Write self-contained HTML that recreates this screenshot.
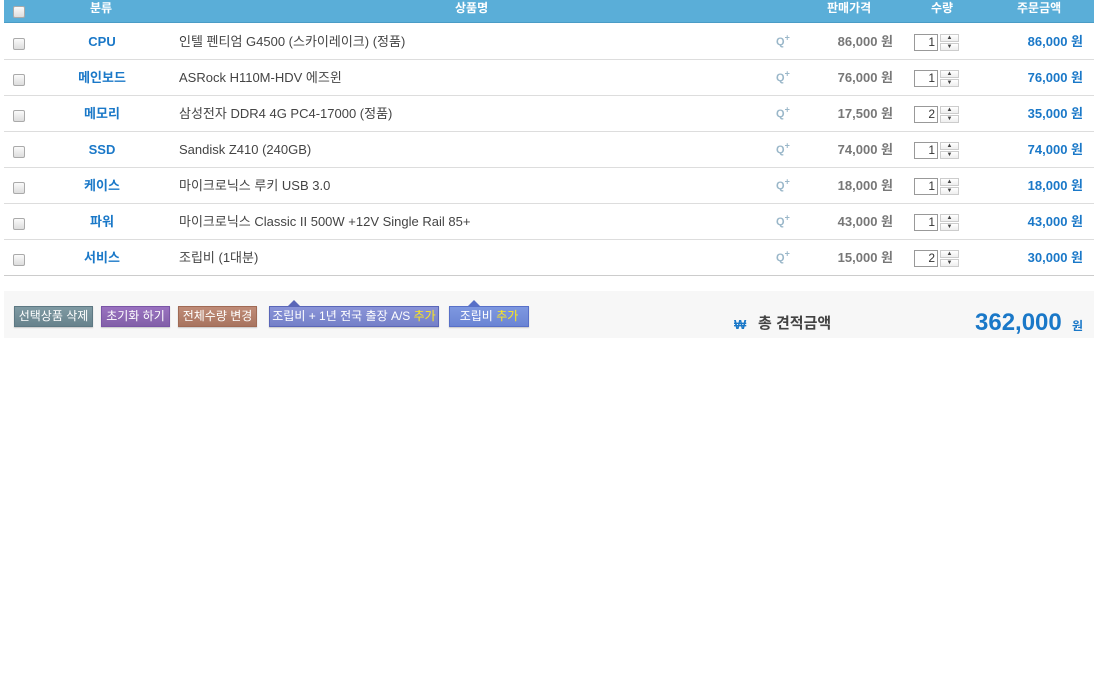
<!DOCTYPE html>
<html><head><meta charset="utf-8"><style>
*{margin:0;padding:0;box-sizing:border-box}
body{width:1098px;height:698px;background:#fff;font-family:"Liberation Sans","Noto Sans CJK KR",sans-serif;position:relative;overflow:hidden}
.a{position:absolute;line-height:16px;white-space:nowrap}
.hdr{left:4px;top:0;width:1090px;height:23px;background:#5aaed8;border-bottom:1px solid #4a9cc6}
.ht{color:#fff;font-size:12px;font-weight:bold;top:0px}
.cb{width:12px;height:12px;border:1px solid #aaa;border-radius:2px;background:linear-gradient(#fafafa,#ddd)}
.line{left:4px;width:1090px;height:1px;background:#ddd}
.cat{color:#1a78c8;font-weight:bold;font-size:13px;width:80px;text-align:center;left:62px}
.nm{left:179px;font-size:13px;color:#444}
.q{left:776px;font-size:11px;font-weight:bold;color:#9ab7c9}
.q sup{font-size:9px;line-height:0}
.pr{right:205px;font-size:13px;font-weight:bold;color:#777}
.tot{right:15px;font-size:13px;font-weight:bold;color:#1a78c8}
.inp{left:914px;width:24px;height:17px;border:1px solid #999;font-size:12px;text-align:right;padding-right:2px;line-height:15px;color:#333;background:#fff}
.sp{left:940px;width:19px;height:8px;border:1px solid #ccc;background:linear-gradient(#fff,#eee);font-size:6px;line-height:6px;text-align:center;color:#444}
.btn{top:306px;height:21px;color:#fff;font-size:12px;line-height:19px;text-align:center;border:1px solid;box-shadow:0 1px 1px rgba(0,0,0,.2)}
.y{color:#ffe81a}
.tri{width:0;height:0;border-left:6px solid transparent;border-right:6px solid transparent}
</style></head><body>
<div class="a hdr"></div>
<div class="a cb" style="left:13px;top:6px"></div>
<div class="a ht" style="left:90px">분류</div>
<div class="a ht" style="left:455px">상품명</div>
<div class="a ht" style="left:827px">판매가격</div>
<div class="a ht" style="left:931px">수량</div>
<div class="a ht" style="left:1017px">주문금액</div>

<div class="a cb" style="left:13px;top:38px"></div><div class="a cat" style="top:34px">CPU</div><div class="a nm" style="top:34px">인텔 펜티엄 G4500 (스카이레이크) (정품)</div><div class="a q" style="top:34px">Q<sup>+</sup></div><div class="a pr" style="top:34px">86,000 원</div><div class="a inp" style="top:34px">1</div><div class="a sp" style="top:34px">▲</div><div class="a sp" style="top:43px">▼</div><div class="a tot" style="top:34px">86,000 원</div><div class="a line" style="top:59px"></div>

<div class="a cb" style="left:13px;top:74px"></div><div class="a cat" style="top:70px">메인보드</div><div class="a nm" style="top:70px">ASRock H110M-HDV 에즈윈</div><div class="a q" style="top:70px">Q<sup>+</sup></div><div class="a pr" style="top:70px">76,000 원</div><div class="a inp" style="top:70px">1</div><div class="a sp" style="top:70px">▲</div><div class="a sp" style="top:79px">▼</div><div class="a tot" style="top:70px">76,000 원</div><div class="a line" style="top:95px"></div>

<div class="a cb" style="left:13px;top:110px"></div><div class="a cat" style="top:106px">메모리</div><div class="a nm" style="top:106px">삼성전자 DDR4 4G PC4-17000 (정품)</div><div class="a q" style="top:106px">Q<sup>+</sup></div><div class="a pr" style="top:106px">17,500 원</div><div class="a inp" style="top:106px">2</div><div class="a sp" style="top:106px">▲</div><div class="a sp" style="top:115px">▼</div><div class="a tot" style="top:106px">35,000 원</div><div class="a line" style="top:131px"></div>

<div class="a cb" style="left:13px;top:146px"></div><div class="a cat" style="top:142px">SSD</div><div class="a nm" style="top:142px">Sandisk Z410 (240GB)</div><div class="a q" style="top:142px">Q<sup>+</sup></div><div class="a pr" style="top:142px">74,000 원</div><div class="a inp" style="top:142px">1</div><div class="a sp" style="top:142px">▲</div><div class="a sp" style="top:151px">▼</div><div class="a tot" style="top:142px">74,000 원</div><div class="a line" style="top:167px"></div>

<div class="a cb" style="left:13px;top:182px"></div><div class="a cat" style="top:178px">케이스</div><div class="a nm" style="top:178px">마이크로닉스 루키 USB 3.0</div><div class="a q" style="top:178px">Q<sup>+</sup></div><div class="a pr" style="top:178px">18,000 원</div><div class="a inp" style="top:178px">1</div><div class="a sp" style="top:178px">▲</div><div class="a sp" style="top:187px">▼</div><div class="a tot" style="top:178px">18,000 원</div><div class="a line" style="top:203px"></div>

<div class="a cb" style="left:13px;top:218px"></div><div class="a cat" style="top:214px">파워</div><div class="a nm" style="top:214px">마이크로닉스 Classic II 500W +12V Single Rail 85+</div><div class="a q" style="top:214px">Q<sup>+</sup></div><div class="a pr" style="top:214px">43,000 원</div><div class="a inp" style="top:214px">1</div><div class="a sp" style="top:214px">▲</div><div class="a sp" style="top:223px">▼</div><div class="a tot" style="top:214px">43,000 원</div><div class="a line" style="top:239px"></div>

<div class="a cb" style="left:13px;top:254px"></div><div class="a cat" style="top:250px">서비스</div><div class="a nm" style="top:250px">조립비 (1대분)</div><div class="a q" style="top:250px">Q<sup>+</sup></div><div class="a pr" style="top:250px">15,000 원</div><div class="a inp" style="top:250px">2</div><div class="a sp" style="top:250px">▲</div><div class="a sp" style="top:259px">▼</div><div class="a tot" style="top:250px">30,000 원</div><div class="a line" style="top:275px;background:#ccc"></div>

<div class="a" style="left:4px;top:291px;width:1090px;height:47px;background:#f7f7f7"></div>
<div class="a btn" style="left:14px;width:79px;background:linear-gradient(#7f9aa3,#67828c);border-color:#5d7883;line-height:19px">선택상품 삭제</div>
<div class="a btn" style="left:101px;width:69px;background:linear-gradient(#9a72c0,#8260a8);border-color:#7a55a6;line-height:19px">초기화 하기</div>
<div class="a btn" style="left:178px;width:79px;background:linear-gradient(#c08c78,#a8745f);border-color:#a06a55;line-height:19px">전체수량 변경</div>
<div class="a tri" style="left:288px;top:300px;border-bottom:6px solid #5a66b8"></div>
<div class="a btn" style="left:269px;width:170px;background:linear-gradient(#8a94d8,#7480c8);border-color:#5a66b8;line-height:19px">조립비 + 1년 전국 출장 A/S <span class="y">추가</span></div>
<div class="a tri" style="left:468px;top:300px;border-bottom:6px solid #5870c8"></div>
<div class="a btn" style="left:449px;width:80px;background:linear-gradient(#7e98e0,#6a84d4);border-color:#5870c8;line-height:19px">조립비 <span class="y">추가</span></div>
<div class="a" style="left:734px;top:317px;font-size:13px;font-weight:bold;color:#1a78c8">₩</div>
<div class="a" style="left:758px;top:316px;font-size:15px;font-weight:bold;color:#444">총 견적금액</div>
<div class="a" style="left:975px;top:310px;font-size:24px;line-height:26px;font-weight:bold;color:#1a78c8">362,000</div>
<div class="a" style="left:1072px;top:318px;font-size:12px;font-weight:bold;color:#1a78c8">원</div>
</body></html>
